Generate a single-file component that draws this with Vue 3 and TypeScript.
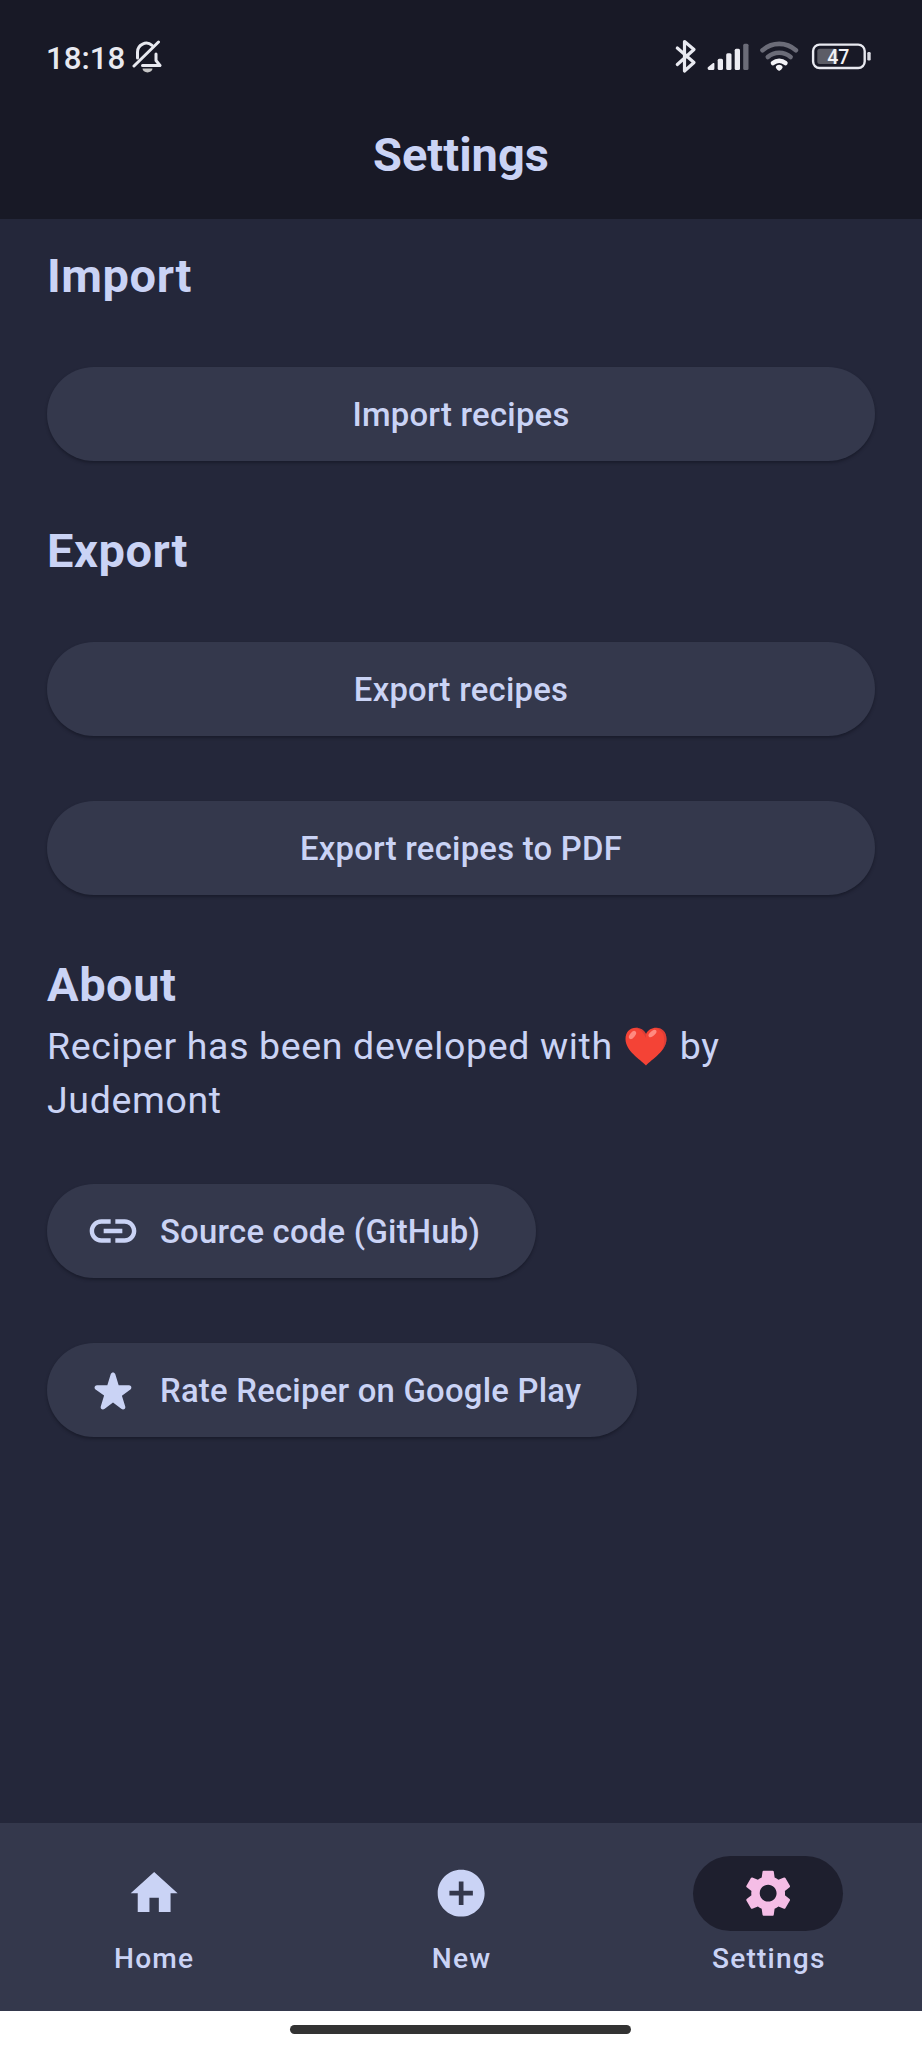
<script setup lang="ts">
interface NavItem {
  label: string
  path: string
  active: boolean
}

const navItems: NavItem[] = [
  { label: 'Home', path: 'M10 20v-6h4v6h5v-8h3L12 3 2 12h3v8z', active: false },
  {
    label: 'New',
    path: 'M12 2C6.48 2 2 6.48 2 12s4.48 10 10 10 10-4.48 10-10S17.52 2 12 2zm5 11h-4v4h-2v-4H7v-2h4V7h2v4h4v2z',
    active: false,
  },
  {
    label: 'Settings',
    path: 'M19.14 12.94c.04-.3.06-.61.06-.94 0-.32-.02-.64-.07-.94l2.03-1.58c.18-.14.23-.41.12-.61l-1.92-3.32c-.12-.22-.37-.29-.59-.22l-2.39.96c-.5-.38-1.03-.7-1.62-.94l-.36-2.54c-.04-.24-.24-.41-.48-.41h-3.84c-.24 0-.43.17-.47.41l-.36 2.54c-.59.24-1.13.57-1.62.94l-2.39-.96c-.22-.08-.47 0-.59.22L2.74 8.87c-.12.21-.08.47.12.61l2.03 1.58c-.05.3-.09.63-.09.94s.02.64.07.94l-2.03 1.58c-.18.14-.23.41-.12.61l1.92 3.32c.12.22.37.29.59.22l2.39-.96c.5.38 1.03.7 1.62.94l.36 2.54c.05.24.24.41.48.41h3.84c.24 0 .44-.17.47-.41l.36-2.54c.59-.24 1.13-.56 1.62-.94l2.39.96c.22.08.47 0 .59-.22l1.92-3.32c.12-.22.07-.47-.12-.61l-2.01-1.58zM12 15.6c-1.98 0-3.6-1.62-3.6-3.6s1.62-3.6 3.6-3.6 3.6 1.62 3.6 3.6-1.62 3.6-3.6 3.6z',
    active: true,
  },
]
</script>

<template>
  <div class="screen">
    <header class="header">
      <div class="status">
        <div class="status-left">
          <span class="clock">18:18</span>
          <svg class="bell" width="30" height="33" viewBox="0 0 30 33" fill="none" stroke="#e8e9f0" stroke-width="3" stroke-linecap="round" stroke-linejoin="round">
            <path d="M5.500 18V12a8.800 8.800 0 0 1 14.500-6.700M24 14v6.500l4 5H10.500" />
            <path d="M2 26L26.500 2" />
            <path d="M10.500 28.600h10a5 3.800 0 0 1-10 0z" fill="#c6c6c6" stroke="none" />
          </svg>
        </div>
        <div class="status-right">
          <svg width="200" height="40" viewBox="0 0 200 40">
            <path d="M4.300 12L21 26.500L11.500 35V5.500L21 13.500L4.300 28.500" fill="none" stroke="#e8e9f0" stroke-width="3.200" stroke-linejoin="round" stroke-linecap="round" />
            <g fill="#ececf2">
              <path d="M35.500 30.800l4.600-3.700a.8.8 0 0 1 1.300.6v4.800a1.500 1.500 0 0 1-1.500 1.500h-3.500a1.700 1.700 0 0 1-.9-3.200z" />
              <rect x="44.700" y="22.700" width="5.300" height="11.300" rx="1.500" />
              <rect x="53.200" y="17.300" width="5.300" height="16.700" rx="1.500" />
              <rect x="61.700" y="12.700" width="5.300" height="21.300" rx="1.500" />
            </g>
            <rect x="70.200" y="7.700" width="5.300" height="26.300" rx="1.500" fill="#6b6c78" />
            <g fill="none" stroke-width="4.600" stroke-linecap="round">
              <path d="M89.500 14.300a25 25 0 0 1 33.400 0" stroke="#6b6c78" />
              <path d="M94.800 21a17.400 17.400 0 0 1 22.800 0" stroke="#6b6c78" />
              <path d="M100 27a10 10 0 0 1 12.400 0" stroke="#f2f2f6" />
            </g>
            <path d="M106.200 28.800c2 0 3.400 1.200 3.400 2.400 0 1.100-2.200 3.500-3.400 3.500s-3.400-2.400-3.400-3.500c0-1.200 1.400-2.400 3.400-2.400z" fill="#f2f2f6" />
            <rect x="140.100" y="8.600" width="51.600" height="23.400" rx="6.500" fill="none" stroke="#e8e9f0" stroke-width="2.400" />
            <rect x="144.300" y="12.700" width="20" height="15.300" rx="2.500" fill="#5c5d66" />
            <rect x="194.300" y="16" width="3.400" height="8.500" rx="1.200" fill="#d8d9e0" />
            <text x="165.300" y="28" class="battery-text" text-anchor="middle">47</text>
          </svg>
        </div>
      </div>
      <h1 class="title">Settings</h1>
    </header>

    <main class="content">
      <h2 class="section-title">Import</h2>
      <button class="btn btn-wide first">Import recipes</button>

      <h2 class="section-title spaced">Export</h2>
      <button class="btn btn-wide first">Export recipes</button>
      <button class="btn btn-wide next">Export recipes to PDF</button>

      <h2 class="section-title spaced">About</h2>
      <p class="about">
        Reciper has been developed with
        <svg class="heart" width="42" height="39" viewBox="0 0 42 39" role="img" aria-label="heart">
          <path d="M21 38.500C15 32 .5 24 .5 12 .5 5 5 .8 10.800.8c4.500 0 8.200 2.200 10.200 6.200C23 3 26.700.8 31.200.8 37 .8 41.500 5 41.500 12 41.500 24 27 32 21 38.500z" fill="#f44336" />
          <path d="M31.200.8C37 .8 41.500 5 41.500 12c0 4-1.600 7.600-4 10.800 2-6 3.400-15.800-2.500-19.600-1.200-.9-2.500-1.700-3.800-2.400z" fill="#c33a38" opacity=".5" />
          <path d="M10.800.8c4.500 0 8.200 2.200 10.200 6.200v4C19 6 15.500 2.500 10.800.8z" fill="#c33a38" opacity=".5" />
          <ellipse cx="7.500" cy="8" rx="2.600" ry="4.700" transform="rotate(38 7.500 8)" fill="#ff8a80" />
          <ellipse cx="27.500" cy="6.500" rx="2.400" ry="4.800" transform="rotate(48 27.500 6.500)" fill="#ff8a80" />
        </svg>
        by<br />Judemont
      </p>
      <button class="btn btn-icon">
        <svg width="56" height="56" viewBox="0 0 24 24" fill="currentColor">
          <path d="M3.900 12c0-1.710 1.390-3.100 3.100-3.100h4V7H7c-2.760 0-5 2.240-5 5s2.240 5 5 5h4v-1.900H7c-1.710 0-3.100-1.390-3.100-3.100zM8 13h8v-2H8v2zm9-6h-4v1.900h4c1.710 0 3.100 1.390 3.100 3.100s-1.390 3.100-3.100 3.100h-4V17h4c2.760 0 5-2.240 5-5s-2.240-5-5-5z" />
        </svg>
        <span class="btn-label">Source code (GitHub)</span>
      </button>
      <button class="btn btn-icon next">
        <svg width="56" height="56" viewBox="0 0 24 24" fill="currentColor">
          <path d="M14.430 10l-1.470-4.840c-.29-.95-1.630-.95-1.910 0L9.570 10H5.120c-.97 0-1.370 1.250-.58 1.810l3.640 2.600-1.430 4.610c-.29.93.79 1.680 1.560 1.090L12 17.310l3.690 2.810c.77.59 1.850-.16 1.560-1.090l-1.430-4.610 3.640-2.600c.79-.57.39-1.810-.58-1.810h-4.450z" />
        </svg>
        <span class="btn-label">Rate Reciper on Google Play</span>
      </button>
    </main>

    <nav class="nav">
      <a v-for="item in navItems" :key="item.label" class="nav-item" :class="{ active: item.active }">
        <span class="indicator">
          <svg width="56.300" height="56.300" viewBox="0 0 24 24" fill="currentColor"><path :d="item.path" /></svg>
        </span>
        <span class="nav-label">{{ item.label }}</span>
      </a>
    </nav>
    <div class="gesture"><div class="gesture-pill"></div></div>
  </div>
</template>

<style>
body {
  margin: 0;
  background: #24273a;
}
</style>

<style scoped>
.screen {
  width: 922px;
  height: 2048px;
  display: flex;
  flex-direction: column;
  overflow: hidden;
  background: #24273a;
  color: #cad3f5;
  font-family: Roboto, "Noto Sans", sans-serif;
}
.header {
  height: 219px;
  flex: none;
  background: #181926;
}
.status {
  height: 84px;
  padding: 36px 49px 0 46px;
  box-sizing: border-box;
  display: flex;
  justify-content: space-between;
}
.status-left {
  display: flex;
  align-items: flex-start;
}
.clock {
  margin-top: 1px;
  font-size: 31.300px;
  line-height: 44px;
  font-weight: 500;
  color: #e8e9f0;
}
.bell {
  margin: 4px 0 0 7px;
}
.battery-text {
  font: 500 19.500px Roboto, sans-serif;
  fill: #f2f2f6;
}
.title {
  margin: 43px 0 0;
  font-size: 47px;
  line-height: 56px;
  font-weight: 700;
  text-align: center;
}
.content {
  flex: 1;
  padding: 29px 47px 0;
  display: flex;
  flex-direction: column;
  align-items: flex-start;
}
.section-title {
  margin: 0;
  font-size: 47px;
  line-height: 55px;
  padding-bottom: 1px;
  font-weight: 700;
  letter-spacing: 0.550px;
}
.section-title.spaced {
  margin-top: 62px;
}
.btn {
  height: 94px;
  box-sizing: border-box;
  flex: none;
  border: 0;
  border-radius: 47px;
  background: #34384c;
  color: #cad3f5;
  font-family: inherit;
  font-size: 32.850px;
  font-weight: 500;
  letter-spacing: 0.240px;
  box-shadow: 0 2px 3px rgba(16, 17, 30, 0.5);
  display: flex;
  align-items: center;
  justify-content: center;
  padding: 0;
  white-space: nowrap;
}
.btn-wide {
  width: 100%;
  padding-top: 1px;
}
.first {
  margin-top: 63px;
}
.next {
  margin-top: 65px;
}
.btn-icon {
  padding: 0 56px 0 37.500px;
  gap: 19.500px;
}
.btn-label {
  padding-top: 1px;
}
.about {
  margin: 6px 0 57px;
  font-size: 37.500px;
  line-height: 54px;
  letter-spacing: 0.640px;
}
.heart {
  margin: 0 3px 0 2px;
  vertical-align: -7px;
}
.nav {
  height: 187.500px;
  flex: none;
  background: #34384c;
  display: flex;
}
.nav-item {
  flex: 1;
  padding-top: 33px;
  display: flex;
  flex-direction: column;
  align-items: center;
}
.indicator {
  width: 150px;
  height: 75px;
  border-radius: 38px;
  display: flex;
  align-items: center;
  justify-content: center;
}
.active .indicator {
  background: #1e1f2e;
  color: #f5bde6;
}
.nav-label {
  margin-top: 9px;
  padding-left: 1px;
  font-size: 28.150px;
  line-height: 38px;
  font-weight: 500;
  letter-spacing: 1.170px;
}
.gesture {
  height: 37.500px;
  flex: none;
  background: #fff;
  display: flex;
  justify-content: center;
}
.gesture-pill {
  width: 341px;
  height: 9px;
  margin: 14.500px 1px 0 0;
  border-radius: 5px;
  background: #333;
}
</style>
